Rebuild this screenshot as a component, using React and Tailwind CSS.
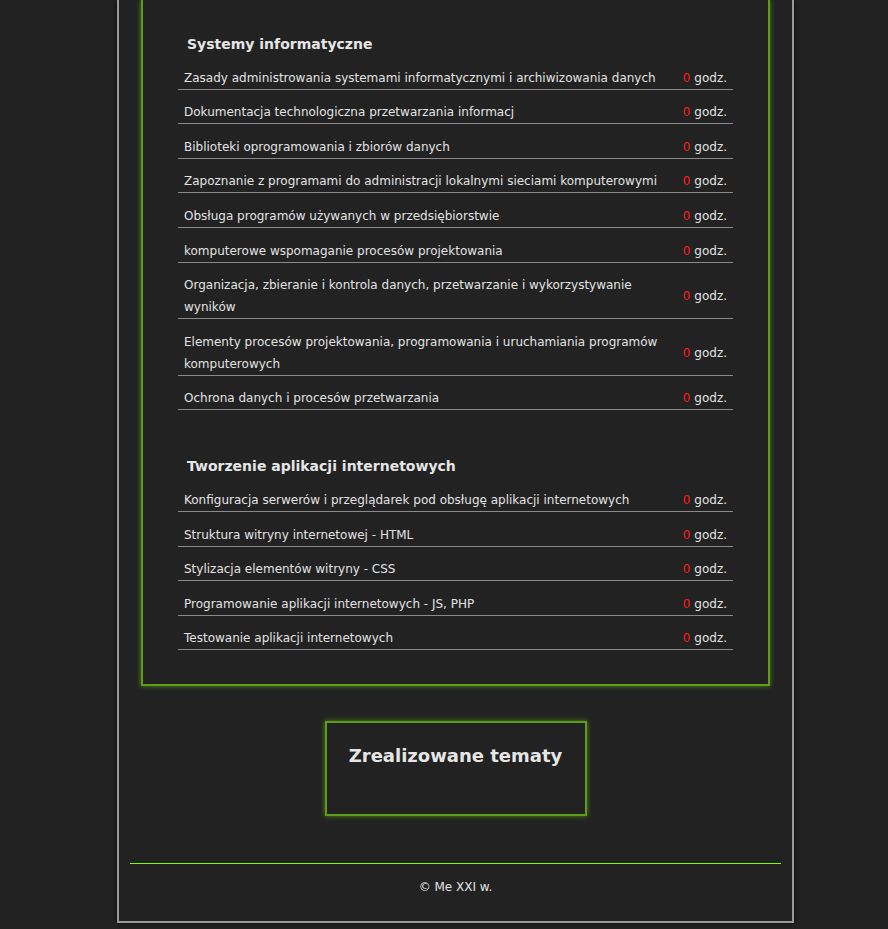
import React from "react";

const sections = [
  {
    title: "Systemy informatyczne",
    items: [
      "Zasady administrowania systemami informatycznymi i archiwizowania danych",
      "Dokumentacja technologiczna przetwarzania informacj",
      "Biblioteki oprogramowania i zbiorów danych",
      "Zapoznanie z programami do administracji lokalnymi sieciami komputerowymi",
      "Obsługa programów używanych w przedsiębiorstwie",
      "komputerowe wspomaganie procesów projektowania",
      "Organizacja, zbieranie i kontrola danych, przetwarzanie i wykorzystywanie wyników",
      "Elementy procesów projektowania, programowania i uruchamiania programów komputerowych",
      "Ochrona danych i procesów przetwarzania",
    ],
  },
  {
    title: "Tworzenie aplikacji internetowych",
    items: [
      "Konfiguracja serwerów i przeglądarek pod obsługę aplikacji internetowych",
      "Struktura witryny internetowej - HTML",
      "Stylizacja elementów witryny - CSS",
      "Programowanie aplikacji internetowych - JS, PHP",
      "Testowanie aplikacji internetowych",
    ],
  },
];

function Row({ text }) {
  return (
    <div className="flex items-center border-b border-[#8a8a8a] pt-[11.6px] pl-[6px] pr-[6px]">
      <span className="flex-1 pr-5 leading-[22px]">{text}</span>
      <span className="leading-[22px] whitespace-nowrap">
        <span className="text-[#ff1a1a]">0</span> godz.
      </span>
    </div>
  );
}

export default function App() {
  return (
    <div
      className="min-h-screen bg-[#222222] text-[#e2e2e2] text-[12px]"
      style={{ fontFamily: '"DejaVu Sans", Verdana, sans-serif' }}
    >
      <div className="ml-[117px] w-[677px] border-x-2 border-b-2 border-[#999999] shadow-[0_0_4px_rgba(0,0,0,0.8)] pb-[25px]">
        <div className="mx-[22px] border-x-2 border-b-2 border-[#5c9e1c] shadow-[0_0_5px_#4d8a12] px-[35px] pt-[33px] pb-[34px]">
          {sections.map((s, i) => (
            <div key={s.title} className={i > 0 ? "mt-[45px]" : ""}>
              <h3 className="pl-[9px] text-[14px] font-bold leading-[22px] text-[#e6e6e6]">
                {s.title}
              </h3>
              <div>
                {s.items.map((t) => (
                  <Row key={t} text={t} />
                ))}
              </div>
            </div>
          ))}
        </div>

        <div className="flex justify-center mt-[35px]">
          <div className="w-[262px] h-[95px] border-2 border-[#5c9e1c] shadow-[0_0_5px_#4d8a12] pt-[20px] text-center">
            <h2 className="text-[18px] font-bold leading-[26px] text-[#e6e6e6]">
              Zrealizowane tematy
            </h2>
          </div>
        </div>

        <div className="mx-[11px] mt-[47px] border-t border-[#7cfc00]" />
        <p className="text-center mt-[14px] leading-[18px]">© Me XXI w.</p>
      </div>
    </div>
  );
}
